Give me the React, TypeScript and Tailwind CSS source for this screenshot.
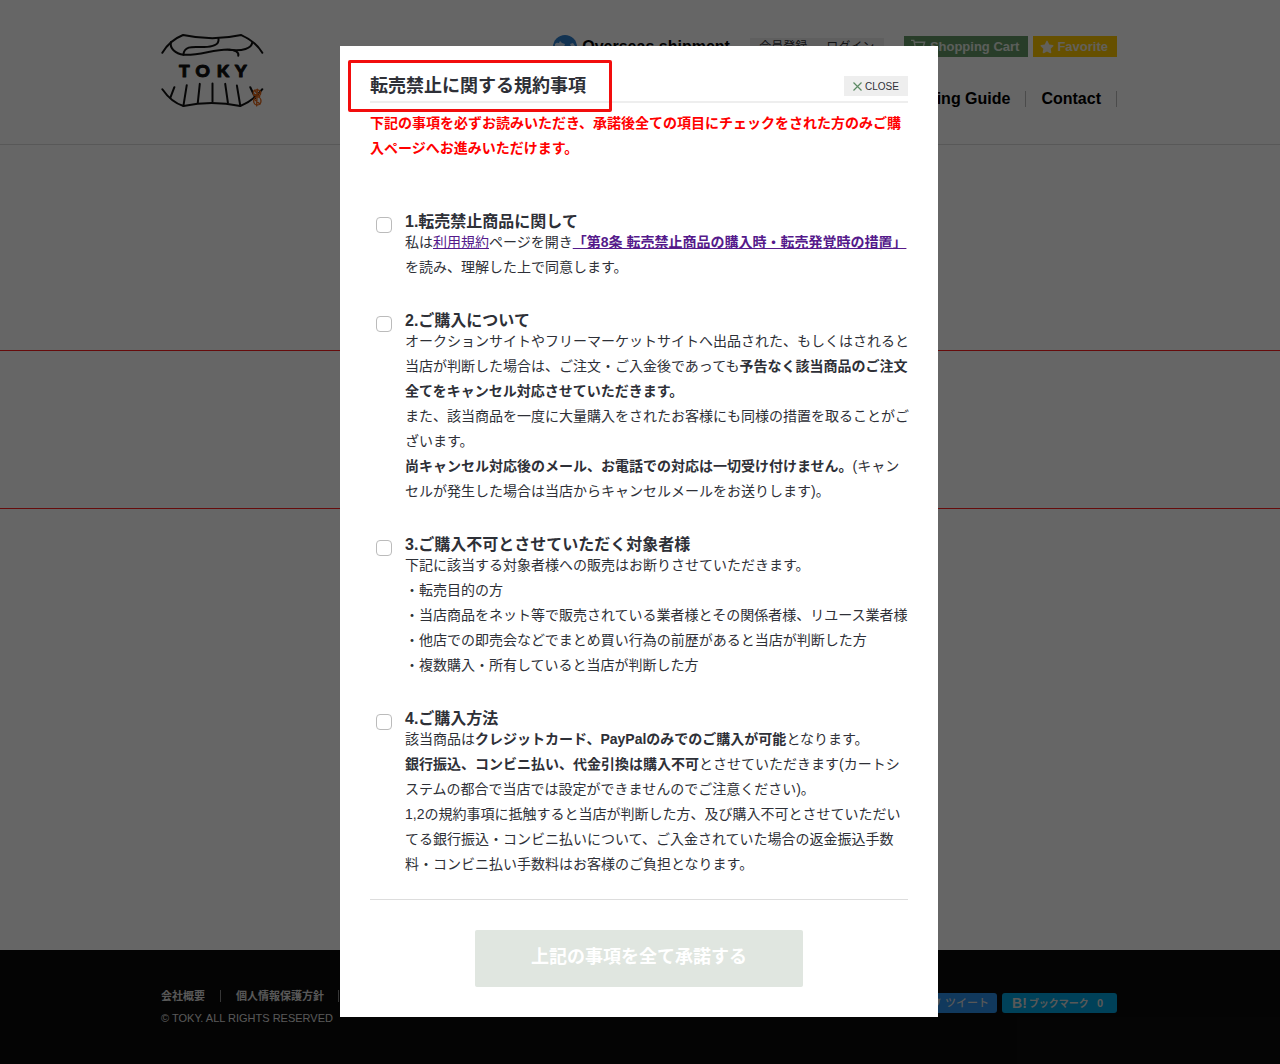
import React, { ReactNode, useState } from 'react';
import { FaStar, FaTwitter } from 'react-icons/fa';

export default function App() {
  return (
    <div className="relative flex min-h-screen flex-col bg-white font-['Liberation_Sans','Noto_Sans_CJK_JP',sans-serif] text-[#2e3037]">
      <Header />
      <main className="flex-1 pt-[205px]">
        <section className="h-[159px] border-y border-[#ff2020]" />
      </main>
      <Footer />
      <TermsDialog />
    </div>
  );
}

function Header() {
  return (
    <header className="h-[145px] border-b border-[#ddd]">
      <div className="mx-auto flex max-w-[958px] justify-between pr-0.5">
        <a href="#top" aria-label="TOKY" className="pt-[33px]">
          <Logo />
        </a>
        <div className="flex flex-col items-end pt-9">
          <div className="flex h-[21px] items-center">
            <a href="#overseas" className="flex items-center gap-[5px] font-bold text-black">
              <Globe />
              Overseas shipment
            </a>
            <div className="ml-5 flex text-xs">
              <a href="#register" className="w-[67px] bg-[#eee] text-center leading-[18px]">会員登録</a>
              <a href="#login" className="w-[67px] bg-[#eee] text-center leading-[18px]">ログイン</a>
            </div>
            <a href="#cart" className="ml-5 flex h-full items-center gap-1 bg-[#659a66] pl-[7px] pr-[9px] text-[13px] font-bold text-[#e4ebe4]">
              <CartIcon />
              Shopping Cart
            </a>
            <a href="#favorite" className="ml-[5px] flex h-full items-center gap-[3px] bg-[#ffc800] pl-[7px] pr-[9px] text-[13px] font-bold text-[#f4f0e0]">
              <FaStar className="h-3.5 w-3.5" />
              Favorite
            </a>
          </div>
          <nav className="mt-[34px] flex items-center font-bold text-black">
            <a href="#guide" className="border-r border-[#bbb] px-[15px] leading-4">Shopping Guide</a>
            <a href="#contact" className="border-r border-[#bbb] px-[15px] leading-4">Contact</a>
          </nav>
        </div>
      </div>
    </header>
  );
}

function Logo() {
  return (
    <svg width="103" height="75" viewBox="36 38 308 224" fill="none" stroke="#111" strokeWidth="6" strokeLinecap="round" strokeLinejoin="round">
      <path d="M40 97 Q62 60 102 44 Q190 63 276 44 Q318 62 339 97" />
      <path d="M66 65 C61 83 78 100 104 103 C150 106 190 87 236 87 C258 88 270 95 267 106" />
      <path d="M208 56 C210 73 190 80 165 80 C137 80 105 73 103 103" />
      <path d="M309 66 C307 84 280 93 240 88" />
      <path d="M40 206 Q67 245 103 256 Q187 238 273 256 Q313 240 339 206" />
      <path d="M76 200 L64 231 M113 194 L103 256 M152 190 L146 247 M190 189 V243 M228 190 L236 246 M263 195 L273 255 M303 200 L318 232" />
      <g stroke="#e0661a" strokeWidth="4">
        <ellipse cx="323" cy="217" rx="11" ry="9" />
        <ellipse cx="324" cy="241" rx="11" ry="12" />
        <path d="M324 206 L322 256 M313 224 L334 216 M315 236 L332 250 M318 212 L331 228" />
      </g>
      <text y="168" textAnchor="middle" fill="#111" stroke="#111" strokeWidth="3" fontFamily="Lato, sans-serif" fontWeight="900" fontSize="53">
        <tspan x="106">T</tspan>
        <tspan x="161">O</tspan>
        <tspan x="221">K</tspan>
        <tspan x="275">Y</tspan>
      </text>
    </svg>
  );
}

function Globe() {
  return (
    <svg width="24" height="24" viewBox="0 0 24 24">
      <circle cx="12" cy="12" r="12" fill="#2f7fce" />
      <path d="M2 9 C4 7 5 8 6 8 L7 6 L9 8 L12 9 L11 12 L8 12 L6 16 L2 14 Z M17 9 L20 8 L22 11 L18 11 Z" fill="#cfe2f5" />
    </svg>
  );
}

function CartIcon() {
  return (
    <svg width="15" height="15" viewBox="0 0 16 15" fill="none" stroke="#e4ebe4" strokeWidth="1.5">
      <path d="M0 1 H3 L5 10 H13 M3.500 3 H14.500 L13 8 H5" />
      <circle cx="6" cy="13" r="1" fill="#fff" />
      <circle cx="12" cy="13" r="1" fill="#fff" />
    </svg>
  );
}

function Footer() {
  return (
    <footer className="h-[114px] bg-[#0c0c0c] text-[11px] font-bold text-[#ddd]">
      <div className="mx-auto flex max-w-[958px] justify-between pr-0.5">
        <div className="pt-[35px]">
          <div className="flex items-center leading-[22px]">
            <a href="#company">会社概要</a>
            <span className="mx-[15px] h-3 w-px bg-[#888]" />
            <a href="#privacy">個人情報保護方針</a>
            <span className="mx-[14px] h-3 w-px bg-[#888]" />
          </div>
          <p className="font-normal leading-[22px]">© TOKY. ALL RIGHTS RESERVED</p>
        </div>
        <div className="flex gap-[5px] pt-[43px]">
          <a href="#tweet" className="flex h-5 items-center gap-1 rounded-[3px] bg-[#2b8fe8] px-2 font-medium">
            <FaTwitter className="h-3 w-3" />
            ツイート
          </a>
          <a href="#bookmark" className="flex h-5 items-center rounded-[3px] bg-[#00a4de] px-2.5">
            <span className="mr-0.5 text-sm">B!</span>
            <span className="text-[10px]">ブックマーク</span>
            <span className="ml-2 mr-1">0</span>
          </a>
        </div>
      </div>
    </footer>
  );
}

function TermsDialog() {
  const [checked, setChecked] = useState<number[]>([]);
  const toggle = (n: number) =>
    setChecked(checked.includes(n) ? checked.filter((c) => c !== n) : [...checked, n]);

  return (
    <div className="absolute inset-0 flex items-start justify-center bg-black/60 pr-0.5 pt-[46px]">
      <div role="dialog" aria-labelledby="terms-title" className="relative w-full max-w-[598px] bg-white px-[30px] py-[30px]">
        <div className="pointer-events-none absolute left-2 top-3.5 h-[52px] w-[264px] rounded-[2px] border-3 border-[#f20d0d]" />
        <div className="flex h-[27px] items-start justify-between border-b-2 border-[#eee]">
          <h1 id="terms-title" className="text-lg font-bold leading-5">転売禁止に関する規約事項</h1>
          <button type="button" className="flex h-5 w-16 items-center justify-center gap-[3px] bg-[#eee] text-[10px]">
            <CloseIcon />
            CLOSE
          </button>
        </div>
        <p className="mt-2 whitespace-nowrap text-sm font-bold leading-[25px] text-[#ff0000]">
          下記の事項を必ずお読みいただき、承諾後全ての項目にチェックをされた方のみご購<br />
          入ページへお進みいただけます。
        </p>

        <div className="mt-[52px] flex flex-col gap-8">
          <Term n={1} title="転売禁止商品に関して" checked={checked.includes(1)} onChange={toggle}>
            私は<a href="#terms" className="text-[#551a8b] underline">利用規約</a>ページを開き
            <a href="#article8" className="font-bold text-[#551a8b] underline">「第8条 転売禁止商品の購入時・転売発覚時の措置」</a><br />
            を読み、理解した上で同意します。
          </Term>
          <Term n={2} title="ご購入について" checked={checked.includes(2)} onChange={toggle}>
            オークションサイトやフリーマーケットサイトへ出品された、もしくはされると<br />
            当店が判断した場合は、ご注文・ご入金後であっても<b>予告なく該当商品のご注文<br />
            全てをキャンセル対応させていただきます。</b><br />
            また、該当商品を一度に大量購入をされたお客様にも同様の措置を取ることがご<br />
            ざいます。<br />
            <b>尚キャンセル対応後のメール、お電話での対応は一切受け付けません。</b>(キャン<br />
            セルが発生した場合は当店からキャンセルメールをお送りします)。
          </Term>
          <Term n={3} title="ご購入不可とさせていただく対象者様" checked={checked.includes(3)} onChange={toggle}>
            下記に該当する対象者様への販売はお断りさせていただきます。<br />
            ・転売目的の方<br />
            ・当店商品をネット等で販売されている業者様とその関係者様、リユース業者様<br />
            ・他店での即売会などでまとめ買い行為の前歴があると当店が判断した方<br />
            ・複数購入・所有していると当店が判断した方
          </Term>
          <Term n={4} title="ご購入方法" checked={checked.includes(4)} onChange={toggle}>
            該当商品は<b>クレジットカード、PayPalのみでのご購入が可能</b>となります。<br />
            <b>銀行振込、コンビニ払い、代金引換は購入不可</b>とさせていただきます(カートシ<br />
            ステムの都合で当店では設定ができませんのでご注意ください)。<br />
            1,2の規約事項に抵触すると当店が判断した方、及び購入不可とさせていただい<br />
            てる銀行振込・コンビニ払いについて、ご入金されていた場合の返金振込手数<br />
            料・コンビニ払い手数料はお客様のご負担となります。
          </Term>
        </div>

        <div className="mt-[22px] flex justify-center border-t border-[#ddd] pt-[30px]">
          <button
            type="button"
            disabled={checked.length < 4}
            className="h-[57px] w-[328px] rounded-[2px] bg-[#4c774c] pb-1 text-lg font-bold text-white disabled:bg-[#e0e6e0]"
          >
            上記の事項を全て承諾する
          </button>
        </div>
      </div>
    </div>
  );
}

function CloseIcon() {
  return (
    <svg width="9" height="9" viewBox="0 0 9 9" fill="none" stroke="#5c8a64" strokeWidth="1.2">
      <path d="M0.500 0.500 L8.500 8.500 M8.500 0.500 L0.500 8.500" />
    </svg>
  );
}

type TermProps = {
  n: number;
  title: string;
  checked: boolean;
  onChange: (n: number) => void;
  children: ReactNode;
};

function Term({ n, title, checked, onChange, children }: TermProps) {
  return (
    <div className="flex items-start">
      <input
        id={`term-${n}`}
        type="checkbox"
        checked={checked}
        onChange={() => onChange(n)}
        className="ml-1.5 mr-[13px] mt-1 h-4 w-4 shrink-0 appearance-none rounded-[4px] border border-[#bbb] bg-white checked:bg-[#4c774c]"
      />
      <div>
        <label htmlFor={`term-${n}`} className="block font-bold leading-[17px]">{n}.{title}</label>
        <div className="whitespace-nowrap text-sm leading-[25px]">{children}</div>
      </div>
    </div>
  );
}
